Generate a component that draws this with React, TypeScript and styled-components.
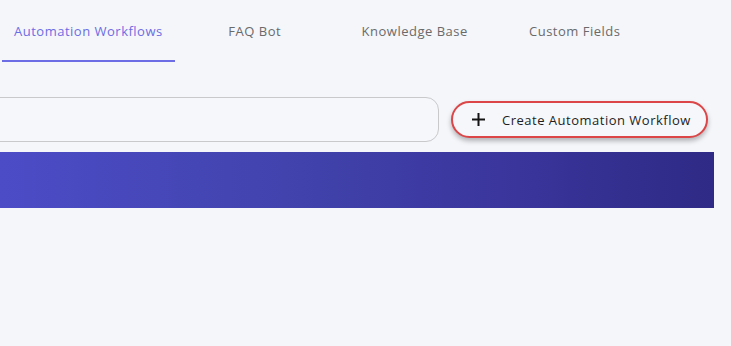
import styled, { createGlobalStyle } from "styled-components";

const GlobalStyle = createGlobalStyle`
  html, body {
    margin: 0;
    padding: 0;
    background: #f5f6fa;
    overflow: hidden;
  }
  body {
    font-family: "Open Sans", "Liberation Sans", sans-serif;
  }
`;

const tabs = ["Automation Workflows", "FAQ Bot", "Knowledge Base", "Custom Fields"];

const App = () => {
  return (
    <Page>
      <GlobalStyle />
      <TabBar>
        {tabs.map((t, i) => (
          <Tab key={t} active={i === 0}>
            {t}
          </Tab>
        ))}
      </TabBar>
      <Toolbar>
        <Search />
        <CreateButton>
          <svg width="15" height="15" viewBox="0 0 15 15">
            <path d="M7.5 1v13M1 7.5h13" stroke="#141414" strokeWidth="2" fill="none" />
          </svg>
          Create Automation Workflow
        </CreateButton>
      </Toolbar>
      <Banner />
    </Page>
  );
};

export default App;

const Page = styled.div`
  width: 731px;
  height: 346px;
  display: flex;
  flex-direction: column;
`;

const TabBar = styled.div`
  display: flex;
  padding-left: 2px;
  height: 64px;
`;

const Tab = styled.div<{ active?: boolean }>`
  min-width: 160px;
  padding: 0 12px;
  box-sizing: border-box;
  display: flex;
  align-items: center;
  justify-content: center;
  padding-top: 2px;
  font-size: 13px;
  font-weight: 500;
  letter-spacing: 0.5px;
  color: ${(p) => (p.active ? "#6c6ce4" : "#6a6a6a")};
  border-bottom: 2px solid ${(p) => (p.active ? "#6d6ee6" : "transparent")};
  height: 62px;
`;

const Toolbar = styled.div`
  display: flex;
  align-items: center;
  gap: 12px;
  margin-top: 33px;
  margin-left: -20px;
`;

const Search = styled.div`
  flex-shrink: 0;
  width: 459px;
  height: 45px;
  box-sizing: border-box;
  border: 1px solid #c9c9cc;
  border-radius: 13px;
  background: #f6f7fa;
`;

const CreateButton = styled.div`
  flex-shrink: 0;
  display: flex;
  align-items: center;
  gap: 16px;
  height: 37px;
  box-sizing: border-box;
  padding: 0 15px 0 18px;
  border: 2.5px solid #dc4648;
  border-radius: 19px;
  background: #f6f7fa;
  box-shadow: 0 3px 5px rgba(0, 0, 0, 0.28);
  font-size: 13px;
  letter-spacing: 0.5px;
  color: #1e1e1e;
  white-space: nowrap;
`;

const Banner = styled.div`
  margin-top: 10px;
  width: 714px;
  height: 56px;
  background: linear-gradient(90deg, #4c4cc7 0%, #4243ad 40%, #3a369d 70%, #2e2a85 100%);
`;
